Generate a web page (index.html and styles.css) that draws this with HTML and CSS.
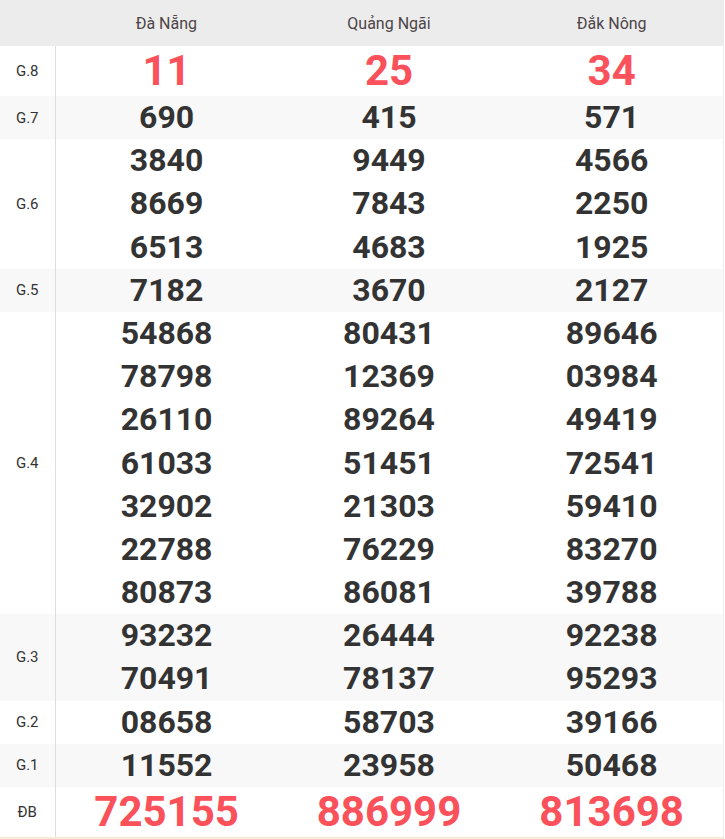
FILE: index.html
```html
<!DOCTYPE html>
<html lang="vi">
<head>
<meta charset="utf-8">
<link rel="stylesheet" href="styles.css">
</head>
<body>
<div class="wrap">
<table class="kq">
  <thead>
    <tr><th class="lbl"></th><th>Đà Nẵng</th><th>Quảng Ngãi</th><th>Đắk Nông</th></tr>
  </thead>
  <tbody>
    <tr class="big"><td class="lbl">G.8</td><td><div class="red">11</div></td><td><div class="red">25</div></td><td><div class="red">34</div></td></tr>
    <tr class="alt"><td class="lbl">G.7</td><td><div>690</div></td><td><div>415</div></td><td><div>571</div></td></tr>
    <tr><td class="lbl">G.6</td><td><div>3840</div><div>8669</div><div>6513</div></td><td><div>9449</div><div>7843</div><div>4683</div></td><td><div>4566</div><div>2250</div><div>1925</div></td></tr>
    <tr class="alt"><td class="lbl">G.5</td><td><div>7182</div></td><td><div>3670</div></td><td><div>2127</div></td></tr>
    <tr><td class="lbl">G.4</td>
      <td><div>54868</div><div>78798</div><div>26110</div><div>61033</div><div>32902</div><div>22788</div><div>80873</div></td>
      <td><div>80431</div><div>12369</div><div>89264</div><div>51451</div><div>21303</div><div>76229</div><div>86081</div></td>
      <td><div>89646</div><div>03984</div><div>49419</div><div>72541</div><div>59410</div><div>83270</div><div>39788</div></td></tr>
    <tr class="alt"><td class="lbl">G.3</td><td><div>93232</div><div>70491</div></td><td><div>26444</div><div>78137</div></td><td><div>92238</div><div>95293</div></td></tr>
    <tr><td class="lbl">G.2</td><td><div>08658</div></td><td><div>58703</div></td><td><div>39166</div></td></tr>
    <tr class="alt"><td class="lbl">G.1</td><td><div>11552</div></td><td><div>23958</div></td><td><div>50468</div></td></tr>
    <tr class="big"><td class="lbl">ĐB</td><td><div class="red">725155</div></td><td><div class="red">886999</div></td><td><div class="red">813698</div></td></tr>
  </tbody>
</table>
</div>
</body>
</html>
```
FILE: styles.css
```css
html, body {
  margin: 0;
  padding: 0;
  background: #fff;
}
.wrap {
  width: 723px;
  border-right: 1px solid #eeeeee;
  border-bottom: 2px solid #f7ebd6;
}
.kq {
  width: 723px;
  border-collapse: collapse;
  table-layout: fixed;
  font-family: Roboto, "Liberation Sans", sans-serif;
}
.kq thead th {
  background: #ececec;
  height: 46px;
  padding: 0;
  font-weight: 400;
  font-size: 16px;
  color: #4d4447;
  text-align: center;
}
.kq th.lbl, .kq td.lbl {
  width: 55px;
}
.kq td {
  padding: 0;
  text-align: center;
  vertical-align: middle;
  font-weight: 700;
  font-size: 32px;
  color: #333333;
}
.kq td div {
  line-height: 43px;
  height: 43.2px;
}
.kq td.lbl {
  font-weight: 400;
  font-size: 15px;
  color: #333333;
  border-right: 1px solid #dddddd;
}
.kq tr.alt td {
  background: #f8f8f8;
}
.kq tr.big td div {
  font-size: 42px;
  height: 50px;
  line-height: 50px;
}
.kq td div.red {
  color: #fa515b;
}
```
